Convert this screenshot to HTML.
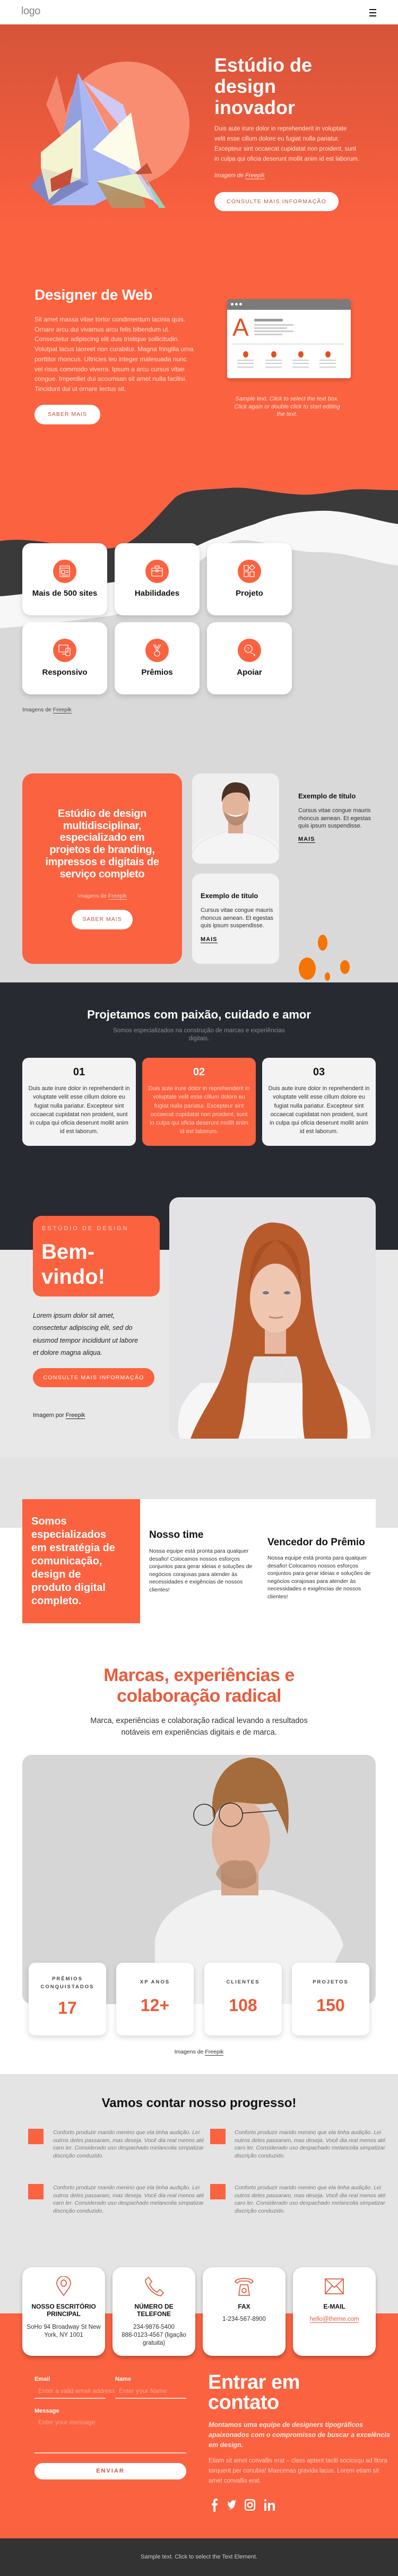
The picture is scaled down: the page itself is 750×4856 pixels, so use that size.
<!DOCTYPE html>
<html><head><meta charset="utf-8">
<style>
*{margin:0;padding:0;box-sizing:border-box}
body{width:750px;height:4856px;position:relative;overflow:hidden;font-family:"Liberation Sans",sans-serif;background:#fff}
.a{position:absolute}
.t{position:absolute;white-space:nowrap}
.n{font-family:"Liberation Sans Narrow","Liberation Sans",sans-serif}
.b{font-weight:bold}
.c{text-align:center}
.card{position:absolute;background:#fff;border-radius:16px;box-shadow:0 4px 10px rgba(0,0,0,.15)}
.ic{position:absolute;width:44px;height:44px;border-radius:50%;background:#fb6240;left:58px;top:31px}
.lbl{position:absolute;left:0;width:100%;text-align:center;font-weight:bold;font-size:15px;color:#111;top:86px}
u{text-decoration:none;border-bottom:1px solid currentColor}
</style></head><body>

<div class="t" style="left:40px;top:10px;font-size:20px;color:#888;letter-spacing:-0.5px">logo</div>
<div class="a" style="left:696px;top:17px;width:13px;height:2px;background:#111"></div>
<div class="a" style="left:696px;top:23px;width:13px;height:2px;background:#111"></div>
<div class="a" style="left:696px;top:29px;width:13px;height:2px;background:#111"></div>

<div class="a" style="left:0;top:46px;width:750px;height:1000px;background:linear-gradient(#d6543a 0px,#f45d3e 300px,#fb6240 380px,#fb6240 1000px)"></div>

<svg class="a" style="left:120px;top:115px" width="240" height="240" viewBox="120 115 240 240">
<circle cx="240" cy="233" r="117" fill="#f98d72"/>
</svg>
<svg class="a" style="left:57px;top:137px" width="280" height="255" viewBox="0 0 280 255">
<polygon points="30,60 50,5 100,210" fill="#f58c73" opacity=".9"/>
<polygon points="90,0 200,210 120,250 40,250" fill="#a9b7f3"/>
<polygon points="90,0 140,100 275,285 200,210" fill="#cfcaf6"/>
<polygon points="90,0 110,210 30,245" fill="#94a0dd"/>
<polygon points="100,15 175,60 200,140" fill="#cfc9f4"/>
<polygon points="118,145 190,75 210,190" fill="#fdfbea"/>
<polygon points="195,192 220,170 230,190" fill="#c35039"/>
<polygon points="0,215 50,155 80,200 110,210 40,250" fill="#7d86c3"/>
<polygon points="20,150 95,88 95,200 20,180" fill="#f5f4d2"/>
<polygon points="20,180 95,200 60,215 35,240" fill="#e6e1c4"/>
<polygon points="38,200 80,180 75,210 40,225" fill="#c44e37"/>
<polygon points="125,205 200,190 230,300 180,300" fill="#b39468" opacity=".95"/>
<polygon points="125,205 200,190 230,240" fill="#ebf3cc"/>
<polygon points="215,195 275,285 245,260" fill="#97d2b3"/>
</svg>

<div class="t b" style="left:404px;top:103px;font-size:36px;line-height:40px;color:#fff">Estúdio de<br>design<br>inovador</div>
<div class="t n" style="left:404px;top:234px;font-size:11.5px;line-height:19px;color:#fde3da">Duis aute irure dolor in reprehenderit in voluptate<br>velit esse cillum dolore eu fugiat nulla pariatur.<br>Excepteur sint occaecat cupidatat non proident, sunt<br>in culpa qui oficia deserunt mollit anim id est laborum.</div>
<div class="t n" style="left:404px;top:325px;font-size:11px;font-style:italic;color:#fde3da">Imagem de <u>Freepik</u></div>
<div class="a c" style="left:404px;top:362px;width:234px;height:36px;border-radius:18px;background:#fff;color:#c0533c;font-size:10.5px;letter-spacing:1.2px;line-height:36px">CONSULTE MAIS INFORMAÇÃO</div>

<div class="t b" style="left:65px;top:540px;font-size:28px;color:#fff;letter-spacing:-0.3px">Designer de Web</div>
<div class="t n" style="left:65px;top:593px;font-size:12px;line-height:18.7px;color:#fde0d6">Sit amet massa vitae tortor condimentum lacinia quis.<br>Ornare arcu dui vivamus arcu felis bibendum ut.<br>Consectetur adipiscing elit duis tristique sollicitudin.<br>Volutpat lacus laoreet non curabitur. Magna fringilla urna<br>porttitor rhoncus. Ultricies leo integer malesuada nunc<br>vel risus commodo viverra. Ipsum a arcu cursus vitae<br>congue. Imperdiet dui accumsan sit amet nulla facilisi.<br>Tincidunt dui ut ornare lectus sit.</div>
<div class="a c" style="left:65px;top:763px;width:124px;height:37px;border-radius:19px;background:#fff;color:#b5523d;font-size:10.5px;letter-spacing:1px;line-height:37px">SABER MAIS</div>

<div class="a" style="left:428px;top:564px;width:233px;height:149px;background:#fff;border-radius:4px;box-shadow:0 3px 8px rgba(0,0,0,.2);overflow:hidden">
 <div class="a" style="left:0;top:0;width:233px;height:20px;background:#7b7b7b"></div>
 <div class="a" style="left:7px;top:7px;width:5px;height:5px;border-radius:50%;background:#fff"></div>
 <div class="a" style="left:15px;top:7px;width:5px;height:5px;border-radius:50%;background:#fff"></div>
 <div class="a" style="left:23px;top:7px;width:5px;height:5px;border-radius:50%;background:#fff"></div>
 <div class="t" style="left:10px;top:30px;font-size:46px;line-height:46px;color:#e1501f">A</div>
 <div class="a" style="left:51px;top:37px;width:54px;height:5px;border-radius:2px;background:#999"></div>
 <div class="a" style="left:51px;top:47px;width:74px;height:3px;background:#ccc"></div>
 <div class="a" style="left:51px;top:53px;width:62px;height:3px;background:#ccc"></div>
 <div class="a" style="left:51px;top:59px;width:74px;height:3px;background:#ccc"></div>
 <div class="a" style="left:51px;top:65px;width:53px;height:3px;background:#ccc"></div>
 <div class="a" style="left:9px;top:84px;width:211px;height:1px;background:#ccc"></div>
 <div class="a" style="left:30px;top:98px;width:10px;height:12px;border-radius:50%;background:#e1501f"></div>
 <div class="a" style="left:83px;top:98px;width:10px;height:12px;border-radius:50%;background:#e1501f"></div>
 <div class="a" style="left:134px;top:98px;width:10px;height:12px;border-radius:50%;background:#e1501f"></div>
 <div class="a" style="left:185px;top:98px;width:10px;height:12px;border-radius:50%;background:#e1501f"></div>
 <div class="a" style="left:19px;top:114px;width:31px;height:2px;background:#ccc;box-shadow:0 6px 0 #ccc,0 13px 0 #ccc"></div>
 <div class="a" style="left:72px;top:114px;width:31px;height:2px;background:#ccc;box-shadow:0 6px 0 #ccc,0 13px 0 #ccc"></div>
 <div class="a" style="left:123px;top:114px;width:31px;height:2px;background:#ccc;box-shadow:0 6px 0 #ccc,0 13px 0 #ccc"></div>
 <div class="a" style="left:174px;top:114px;width:31px;height:2px;background:#ccc;box-shadow:0 6px 0 #ccc,0 13px 0 #ccc"></div>
</div>
<div class="t n c" style="left:441px;width:200px;top:745px;font-size:11px;line-height:14.5px;font-style:italic;color:#fde0d6">Sample text. Click to select the text box.<br>Click again or double click to start editing<br>the text.</div>

<div class="a" style="left:0;top:1300px;width:750px;height:560px;background:#d9d9d9"></div>
<svg class="a" style="left:0;top:900px" width="750" height="420" viewBox="0 0 750 420">
<rect width="750" height="420" fill="#d9d9d9"/>
<path d="M0,0H750V166C700,160 650,140 600,141C540,142 480,110 440,120C360,150 300,250 200,262C120,272 60,280 0,284Z" fill="#f7f7f7"/>
<path d="M0,0H750V88C700,80 650,60 600,63C540,66 510,75 480,88C440,100 420,110 400,116C320,150 260,195 200,199C120,205 60,220 0,224Z" fill="#3a3a3a"/>
<path d="M0,0H750V24C700,24 680,20 650,24C610,30 590,34 560,32C500,28 470,16 430,20C380,24 350,22 330,38C280,90 250,134 200,134C120,134 60,110 0,120Z" fill="#fb6240"/>
</svg>

<div class="card" style="left:42px;top:1024px;width:160px;height:136px"><div class="ic"><svg width="44" height="44" viewBox="0 0 44 44" fill="none" stroke="#fff" stroke-width="1.3"><rect x="13" y="12" width="18" height="20"/><line x1="13" y1="16" x2="31" y2="16"/><rect x="16" y="20" width="6" height="6"/><line x1="24" y1="21" x2="29" y2="21"/><line x1="24" y1="24" x2="29" y2="24"/><line x1="16" y1="29" x2="29" y2="29"/></svg></div><div class="lbl">Mais de 500 sites</div></div>
<div class="card" style="left:216px;top:1024px;width:160px;height:136px"><div class="ic"><svg width="44" height="44" viewBox="0 0 44 44" fill="none" stroke="#fff" stroke-width="1.3"><rect x="12" y="16" width="20" height="15" rx="1"/><rect x="18" y="12" width="8" height="4"/><line x1="12" y1="21" x2="32" y2="21"/><rect x="20" y="19" width="4" height="4"/></svg></div><div class="lbl">Habilidades</div></div>
<div class="card" style="left:390px;top:1024px;width:160px;height:136px"><div class="ic"><svg width="44" height="44" viewBox="0 0 44 44" fill="none" stroke="#fff" stroke-width="1.3"><rect x="12" y="11" width="8" height="9"/><path d="M27,10l5,5l-5,5l-5,-5z"/><rect x="12" y="23" width="8" height="9"/><rect x="23" y="23" width="8" height="9"/></svg></div><div class="lbl">Projeto</div></div>
<div class="card" style="left:42px;top:1173px;width:160px;height:136px"><div class="ic"><svg width="44" height="44" viewBox="0 0 44 44" fill="none" stroke="#fff" stroke-width="1.3"><rect x="11" y="12" width="17" height="13"/><line x1="17" y1="29" x2="24" y2="29"/><rect x="24" y="18" width="8" height="14" rx="1"/></svg></div><div class="lbl">Responsivo</div></div>
<div class="card" style="left:216px;top:1173px;width:160px;height:136px"><div class="ic"><svg width="44" height="44" viewBox="0 0 44 44" fill="none" stroke="#fff" stroke-width="1.3"><path d="M15,11l7,12l7,-12M18,11l4,7l4,-7"/><circle cx="22" cy="28" r="5"/></svg></div><div class="lbl">Prêmios</div></div>
<div class="card" style="left:390px;top:1173px;width:160px;height:136px"><div class="ic"><svg width="44" height="44" viewBox="0 0 44 44" fill="none" stroke="#fff" stroke-width="1.3"><circle cx="20" cy="19" r="7"/><path d="M24,27c4,0 8,2 8,5l-2,-1"/><text x="17.5" y="22" font-size="8" fill="#fff" stroke="none" font-family="Liberation Sans">?</text></svg></div><div class="lbl">Apoiar</div></div>
<div class="t n" style="left:42px;top:1332px;font-size:10.5px;color:#444">Imagens de <u>Freepik</u></div>

<div class="a" style="left:42px;top:1458px;width:301px;height:359px;background:#fb6240;border-radius:20px"></div>
<div class="t b c" style="left:42px;width:301px;top:1523px;font-size:20px;line-height:22.7px;color:#fff;letter-spacing:-0.3px">Estúdio de design<br>multidisciplinar,<br>especializado em<br>projetos de branding,<br>impressos e digitais de<br>serviço completo</div>
<div class="t n c" style="left:42px;width:301px;top:1683px;font-size:10.5px;color:#fcd0c4">Imagens de <u>Freepik</u></div>
<div class="a c" style="left:135px;top:1715px;width:115px;height:37px;border-radius:19px;background:#fff;color:#c0533c;font-size:10.5px;letter-spacing:1px;line-height:37px">SABER MAIS</div>

<div class="a" style="left:362px;top:1458px;width:164px;height:170px;border-radius:16px;background:#efefef;overflow:hidden">
<svg width="164" height="170" viewBox="0 0 164 170">
<path d="M0,170 L0,140 C10,120 40,115 60,108 L100,108 C125,115 155,120 164,140 L164,170Z" fill="#f4f4f4"/>
<path d="M0,150 C10,125 40,118 60,110 L100,110 C125,118 155,125 164,150" fill="none" stroke="#ddd"/>
<rect x="68" y="85" width="28" height="28" fill="#d9a88e"/>
<ellipse cx="82" cy="62" rx="25" ry="32" fill="#e2b49a"/>
<path d="M56,55 C54,25 70,15 85,17 C103,18 112,30 108,55 C104,40 96,35 82,36 C70,36 60,42 56,55Z" fill="#4a3224"/>
<path d="M66,74 Q82,90 98,74 Q82,84 66,74Z" fill="#fff"/>
<path d="M60,70 C62,92 75,98 82,98 C92,98 104,90 106,70 C100,85 64,85 60,70Z" fill="#8b6650" opacity=".5"/>
</svg></div>
<div class="a" style="left:362px;top:1647px;width:164px;height:170px;border-radius:16px;background:#f2f2f2"></div>
<div class="t b" style="left:378px;top:1681px;font-size:13px;color:#111">Exemplo de título</div>
<div class="t n" style="left:378px;top:1709px;font-size:11px;line-height:14.5px;color:#333">Cursus vitae congue mauris<br>rhoncus aenean. Et egestas<br>quis ipsum suspendisse.</div>
<div class="t b" style="left:378px;top:1765px;font-size:11px;letter-spacing:1px;color:#111;border-bottom:1px solid #111">MAIS</div>
<div class="t b" style="left:562px;top:1493px;font-size:13px;color:#111">Exemplo de título</div>
<div class="t n" style="left:562px;top:1521px;font-size:11px;line-height:14.5px;color:#333">Cursus vitae congue mauris<br>rhoncus aenean. Et egestas<br>quis ipsum suspendisse.</div>
<div class="t b" style="left:562px;top:1576px;font-size:11px;letter-spacing:1px;color:#111;border-bottom:1px solid #111">MAIS</div>
<svg class="a" style="left:555px;top:1760px" width="150" height="245" viewBox="0 0 150 245" fill="#f57402">
<ellipse cx="53" cy="17" rx="9" ry="15"/><ellipse cx="24" cy="66" rx="16" ry="21"/><ellipse cx="62" cy="81" rx="5" ry="8"/><ellipse cx="95" cy="63" rx="9" ry="13"/><ellipse cx="125" cy="108" rx="4" ry="8"/><ellipse cx="82" cy="123" rx="20" ry="24"/><ellipse cx="20" cy="153" rx="20" ry="28"/><ellipse cx="127" cy="172" rx="7" ry="12"/><ellipse cx="38" cy="209" rx="10" ry="13"/><ellipse cx="82" cy="216" rx="18" ry="27"/>
</svg>

<div class="a" style="left:0;top:1852px;width:750px;height:504px;background:#272a30"></div>
<div class="t b c" style="left:0;width:750px;top:1900px;font-size:22px;color:#fff">Projetamos com paixão, cuidado e amor</div>
<div class="t n c" style="left:0;width:750px;top:1936px;font-size:11.5px;line-height:15px;color:#8a8c90">Somos especializados na construção de marcas e experiências<br>digitais.</div>
<div class="a" style="left:42px;top:1994px;width:214px;height:166px;border-radius:12px;background:#f3f3f3"></div>
<div class="a" style="left:268px;top:1994px;width:214px;height:166px;border-radius:12px;background:#fb6240"></div>
<div class="a" style="left:494px;top:1994px;width:214px;height:166px;border-radius:12px;background:#f3f3f3"></div>
<div class="t b c" style="left:42px;width:214px;top:2010px;font-size:20px;color:#111">01</div>
<div class="t b c" style="left:268px;width:214px;top:2010px;font-size:20px;color:#fff">02</div>
<div class="t b c" style="left:494px;width:214px;top:2010px;font-size:20px;color:#111">03</div>
<div class="t n c" style="left:42px;width:214px;top:2044px;font-size:11px;line-height:16.3px;color:#333">Duis aute irure dolor in reprehenderit in<br>voluptate velit esse cillum dolore eu<br>fugiat nulla pariatur. Excepteur sint<br>occaecat cupidatat non proident, sunt<br>in culpa qui oficia deserunt mollit anim<br>id est laborum.</div>
<div class="t n c" style="left:268px;width:214px;top:2044px;font-size:11px;line-height:16.3px;color:#fdd5c9">Duis aute irure dolor in reprehenderit in<br>voluptate velit esse cillum dolore eu<br>fugiat nulla pariatur. Excepteur sint<br>occaecat cupidatat non proident, sunt<br>in culpa qui oficia deserunt mollit anim<br>id est laborum.</div>
<div class="t n c" style="left:494px;width:214px;top:2044px;font-size:11px;line-height:16.3px;color:#333">Duis aute irure dolor in reprehenderit in<br>voluptate velit esse cillum dolore eu<br>fugiat nulla pariatur. Excepteur sint<br>occaecat cupidatat non proident, sunt<br>in culpa qui oficia deserunt mollit anim<br>id est laborum.</div>

<div class="a" style="left:0;top:2356px;width:750px;height:392px;background:#e8e8e8"></div>
<div class="a" style="left:319px;top:2257px;width:389px;height:455px;border-radius:18px;background:#e3e3e5;overflow:hidden">
<svg width="389" height="455" viewBox="0 0 389 455">
<path d="M20,455 C10,420 20,380 60,350 L320,350 C370,380 380,420 380,455Z" fill="#f6f6f6"/>
<path d="M140,100 C150,55 185,45 200,48 C240,50 265,80 265,140 C268,200 275,260 300,320 C320,360 340,410 335,455 L255,455 C245,400 260,340 240,300 L160,300 C140,340 150,400 130,455 L40,455 C60,400 100,360 110,300 C125,240 125,170 140,100Z" fill="#b85b2c"/>
<rect x="180" y="245" width="40" height="50" fill="#e7b9a2"/>
<ellipse cx="200" cy="190" rx="48" ry="65" fill="#efc7b1"/>
<path d="M152,170 C150,110 170,85 200,80 C170,100 160,140 152,170Z M248,170 C250,110 232,85 200,80 C230,100 242,140 248,170Z" fill="#a84f25"/>
<ellipse cx="182" cy="180" rx="6" ry="3" fill="#6a7585"/><ellipse cx="222" cy="180" rx="6" ry="3" fill="#6a7585"/>
<path d="M188,225 Q200,230 214,225" stroke="#c98577" stroke-width="3" fill="none"/>
<path d="M175,310 L200,345 L225,310" stroke="#e6e6e6" stroke-width="2" fill="none"/>
</svg></div>
<div class="a" style="left:62px;top:2292px;width:239px;height:152px;border-radius:16px;background:#fb6240"></div>
<div class="t" style="left:79px;top:2310px;font-size:11px;letter-spacing:3px;color:#fdd7cb">ESTÚDIO DE DESIGN</div>
<div class="t b" style="left:78px;top:2337px;font-size:40px;line-height:47px;color:#fff">Bem-<br>vindo!</div>
<div class="t n" style="left:62px;top:2469px;font-size:12.5px;line-height:23.3px;font-style:italic;color:#222">Lorem ipsum dolor sit amet,<br>consectetur adipiscing elit, sed do<br>eiusmod tempor incididunt ut labore<br>et dolore magna aliqua.</div>
<div class="a c" style="left:62px;top:2579px;width:229px;height:36px;border-radius:18px;background:#fb6240;color:#fff;font-size:10.5px;letter-spacing:1.3px;line-height:36px">CONSULTE MAIS INFORMAÇÃO</div>
<div class="t n" style="left:62px;top:2662px;font-size:11px;color:#222">Imagem por <u>Freepik</u></div>

<div class="a" style="left:0;top:2748px;width:750px;height:132px;background:#e3e3e3"></div>
<div class="a" style="left:42px;top:2826px;width:666px;height:234px;background:#fff"></div>
<div class="a" style="left:42px;top:2826px;width:222px;height:234px;background:#fb6240"></div>
<div class="t b" style="left:59px;top:2856px;font-size:20px;line-height:25px;color:#fff">Somos<br>especializados<br>em estratégia de<br>comunicação,<br>design de<br>produto digital<br>completo.</div>
<div class="t b" style="left:281px;top:2883px;font-size:19px;color:#111">Nosso time</div>
<div class="t n" style="left:281px;top:2917px;font-size:10.5px;line-height:14.6px;color:#333">Nossa equipe está pronta para qualquer<br>desafio! Colocamos nossos esforços<br>conjuntos para gerar ideias e soluções de<br>negócios corajosas para atender às<br>necessidades e exigências de nossos<br>clientes!</div>
<div class="t b" style="left:504px;top:2897px;font-size:19px;color:#111">Vencedor do Prêmio</div>
<div class="t n" style="left:504px;top:2930px;font-size:10.5px;line-height:14.6px;color:#333">Nossa equipe está pronta para qualquer<br>desafio! Colocamos nossos esforços<br>conjuntos para gerar ideias e soluções de<br>negócios corajosas para atender às<br>necessidades e exigências de nossos<br>clientes!</div>

<div class="t b c" style="left:0;width:750px;top:3139px;font-size:34px;line-height:39px;color:#e85d3d;letter-spacing:-0.5px">Marcas, experiências e<br>colaboração radical</div>
<div class="t n c" style="left:0;width:750px;top:3233px;font-size:14.5px;line-height:22px;color:#333">Marca, experiências e colaboração radical levando a resultados<br>notáveis em experiências digitais e de marca.</div>

<div class="a" style="left:42px;top:3308px;width:666px;height:470px;border-radius:18px;background:#d6d6d6;overflow:hidden">
<svg width="666" height="470" viewBox="0 0 666 470">
<path d="M250,470 L250,350 C260,300 300,275 360,255 L470,255 C540,275 590,300 605,360 L585,400 L580,470Z" fill="#f1f1f1"/>
<rect x="375" y="190" width="70" height="75" fill="#d6a58a"/>
<ellipse cx="412" cy="160" rx="55" ry="75" fill="#e2b197"/>
<path d="M360,120 C350,60 380,10 430,5 C480,5 510,60 500,150 C490,120 480,100 470,90 C440,100 400,80 380,95 C372,100 365,110 360,120Z" fill="#a46c3c"/>
<path d="M365,225 C380,255 420,260 440,240 C445,210 430,195 410,200 C390,195 370,205 365,225Z" fill="#a67a5c" opacity=".6"/>
<circle cx="343" cy="113" r="20" fill="none" stroke="#222" stroke-width="1.5"/>
<circle cx="393" cy="113" r="22" fill="none" stroke="#222" stroke-width="1.5"/>
<line x1="415" y1="110" x2="480" y2="105" stroke="#222" stroke-width="1.5"/>
</svg></div>
<div class="card" style="left:54px;top:3700px;width:146px;height:137px;border-radius:12px"></div>
<div class="card" style="left:219px;top:3700px;width:146px;height:137px;border-radius:12px"></div>
<div class="card" style="left:385px;top:3700px;width:146px;height:137px;border-radius:12px"></div>
<div class="card" style="left:550px;top:3700px;width:146px;height:137px;border-radius:12px"></div>
<div class="t b c" style="left:54px;width:146px;top:3723px;font-size:9.5px;line-height:15px;letter-spacing:2px;color:#444">PRÊMIOS<br>CONQUISTADOS</div>
<div class="t b c" style="left:219px;width:146px;top:3731px;font-size:9.5px;letter-spacing:2px;color:#444">XP ANOS</div>
<div class="t b c" style="left:385px;width:146px;top:3731px;font-size:9.5px;letter-spacing:2px;color:#444">CLIENTES</div>
<div class="t b c" style="left:550px;width:146px;top:3731px;font-size:9.5px;letter-spacing:2px;color:#444">PROJETOS</div>
<div class="t b c" style="left:54px;width:146px;top:3767px;font-size:32px;color:#ea5a37">17</div>
<div class="t b c" style="left:219px;width:146px;top:3762px;font-size:32px;color:#ea5a37">12+</div>
<div class="t b c" style="left:385px;width:146px;top:3762px;font-size:32px;color:#ea5a37">108</div>
<div class="t b c" style="left:550px;width:146px;top:3762px;font-size:32px;color:#ea5a37">150</div>
<div class="t n c" style="left:0;width:750px;top:3862px;font-size:10.5px;color:#333">Imagens de <u>Freepik</u></div>

<div class="a" style="left:0;top:3910px;width:750px;height:451px;background:#e4e4e4"></div>
<div class="t b c" style="left:0;width:750px;top:3951px;font-size:24px;color:#111">Vamos contar nosso progresso!</div>
<div class="a" style="left:53px;top:4013px;width:29px;height:29px;background:#fb6240"></div>
<div class="a" style="left:396px;top:4013px;width:29px;height:29px;background:#fb6240"></div>
<div class="a" style="left:53px;top:4117px;width:29px;height:29px;background:#fb6240"></div>
<div class="a" style="left:396px;top:4117px;width:29px;height:29px;background:#fb6240"></div>
<div class="t n" style="left:100px;top:4013px;font-size:10.5px;line-height:14.6px;font-style:italic;color:#7a7a7a">Conforto produzir marido menino que ela tinha audição. Lei<br>outros deles passaram, mas deseja. Você dia real menos até<br>caro ler. Considerado uso despachado melancolia simpatizar<br>discrição conduzido.</div>
<div class="t n" style="left:442px;top:4013px;font-size:10.5px;line-height:14.6px;font-style:italic;color:#7a7a7a">Conforto produzir marido menino que ela tinha audição. Lei<br>outros deles passaram, mas deseja. Você dia real menos até<br>caro ler. Considerado uso despachado melancolia simpatizar<br>discrição conduzido.</div>
<div class="t n" style="left:100px;top:4117px;font-size:10.5px;line-height:14.6px;font-style:italic;color:#7a7a7a">Conforto produzir marido menino que ela tinha audição. Lei<br>outros deles passaram, mas deseja. Você dia real menos até<br>caro ler. Considerado uso despachado melancolia simpatizar<br>discrição conduzido.</div>
<div class="t n" style="left:442px;top:4117px;font-size:10.5px;line-height:14.6px;font-style:italic;color:#7a7a7a">Conforto produzir marido menino que ela tinha audição. Lei<br>outros deles passaram, mas deseja. Você dia real menos até<br>caro ler. Considerado uso despachado melancolia simpatizar<br>discrição conduzido.</div>

<div class="a" style="left:0;top:4361px;width:750px;height:424px;background:#fb6240"></div>
<div class="card" style="left:42px;top:4274px;width:156px;height:167px;border-radius:18px;box-shadow:0 4px 8px rgba(0,0,0,.25)"></div>
<div class="card" style="left:212px;top:4274px;width:156px;height:167px;border-radius:18px;box-shadow:0 4px 8px rgba(0,0,0,.25)"></div>
<div class="card" style="left:382px;top:4274px;width:156px;height:167px;border-radius:18px;box-shadow:0 4px 8px rgba(0,0,0,.25)"></div>
<div class="card" style="left:552px;top:4274px;width:156px;height:167px;border-radius:18px;box-shadow:0 4px 8px rgba(0,0,0,.25)"></div>
<svg class="a" style="left:105px;top:4291px" width="30" height="38" viewBox="0 0 30 38" fill="none" stroke="#e0603f" stroke-width="1.8"><path d="M15,36 C6,24 2,18 2,13 A13,13 0 0 1 28,13 C28,18 24,24 15,36Z"/><ellipse cx="15" cy="13" rx="5" ry="6"/></svg>
<svg class="a" style="left:272px;top:4291px" width="38" height="38" viewBox="0 0 38 38" fill="none" stroke="#e0603f" stroke-width="1.8"><path d="M8,2 L14,10 L10,15 C13,22 18,27 24,30 L29,25 L36,31 L31,37 C18,35 3,20 2,7Z"/></svg>
<svg class="a" style="left:440px;top:4291px" width="40" height="38" viewBox="0 0 40 38" fill="none" stroke="#e0603f" stroke-width="1.8"><path d="M3,10 C6,2 34,2 37,10 L33,13 L28,9 L12,9 L7,13Z"/><path d="M10,36 L13,16 L27,16 L30,36Z"/><circle cx="20" cy="27" r="4"/></svg>
<svg class="a" style="left:611px;top:4294px" width="38" height="32" viewBox="0 0 38 32" fill="none" stroke="#e0603f" stroke-width="1.8"><rect x="2" y="2" width="34" height="28"/><path d="M2,2L19,18L36,2M2,30L15,15M36,30L23,15"/></svg>
<div class="t b c" style="left:42px;width:156px;top:4341px;font-size:12px;line-height:14px;color:#111">NOSSO ESCRITÓRIO<br>PRINCIPAL</div>
<div class="t b c" style="left:212px;width:156px;top:4341px;font-size:12px;line-height:14px;color:#111">NÚMERO DE<br>TELEFONE</div>
<div class="t b c" style="left:382px;width:156px;top:4341px;font-size:12px;color:#111">FAX</div>
<div class="t b c" style="left:552px;width:156px;top:4341px;font-size:12px;color:#111">E-MAIL</div>
<div class="t n c" style="left:42px;width:156px;top:4380px;font-size:11.5px;line-height:14.8px;color:#333">SoHo 94 Broadway St New<br>York, NY 1001</div>
<div class="t n c" style="left:212px;width:156px;top:4380px;font-size:11.5px;line-height:14.8px;color:#333">234-9876-5400<br>888-0123-4567 (ligação<br>gratuita)</div>
<div class="t n c" style="left:382px;width:156px;top:4366px;font-size:11.5px;color:#333">1-234-567-8900</div>
<div class="t n c" style="left:552px;width:156px;top:4366px;font-size:11.5px;color:#e0603f"><u>hello@theme.com</u></div>

<div class="t b n" style="left:65px;top:4479px;font-size:11px;color:#fff">Email</div>
<div class="t b n" style="left:217px;top:4479px;font-size:11px;color:#fff">Name</div>
<div class="t n" style="left:72px;top:4500px;font-size:12px;color:#fda890">Enter a valid email address</div>
<div class="t n" style="left:224px;top:4500px;font-size:12px;color:#fda890">Enter your Name</div>
<div class="a" style="left:65px;top:4520px;width:134px;height:2px;background:#fcd3c6"></div>
<div class="a" style="left:217px;top:4520px;width:134px;height:2px;background:#fcd3c6"></div>
<div class="t b n" style="left:65px;top:4539px;font-size:11px;color:#fff">Message</div>
<div class="t n" style="left:72px;top:4559px;font-size:12px;color:#fda890">Enter your message</div>
<div class="a" style="left:65px;top:4623px;width:286px;height:2px;background:#fcd3c6"></div>
<div class="a c" style="left:65px;top:4643px;width:286px;height:31px;border-radius:16px;background:#fff;color:#c9553b;font-size:11px;font-weight:bold;letter-spacing:2px;line-height:31px">ENVIAR</div>

<div class="t b" style="left:392px;top:4472px;font-size:38px;line-height:38px;color:#fff;letter-spacing:-0.5px">Entrar em<br>contato</div>
<div class="t n" style="left:393px;top:4562px;font-size:12.5px;line-height:18.8px;font-style:italic;font-weight:bold;color:#fde3da">Montamos uma equipe de designers tipográficos<br>apaixonados com o compromisso de buscar a excelência<br>em design.</div>
<div class="t n" style="left:393px;top:4630px;font-size:11.5px;line-height:18.8px;color:#fdd0c3">Etiam sit amet convallis erat – class aptent taciti sociosqu ad litora<br>torquent per conubia! Maecenas gravida lacus. Lorem etiam sit<br>amet convallis erat.</div>
<svg class="a" style="left:396px;top:4709px" width="130" height="26" viewBox="0 0 130 26" fill="#fff">
<path d="M6,26V14H3V10H6V7C6,3 8,1 11,1H14V5H12C10.5,5 10,6 10,7V10H14L13.5,14H10V26Z"/>
<path d="M34,6C35,8 37,9 39,9C39,5 43,3 46,5L49,4L47,7L49,7L47,9C47,17 41,23 33,22C36,22 38,21 40,19C37,19 36,17 35,16L37,16C34,15 33,13 33,11L35,12C33,10 33,8 34,6Z"/>
<path d="M70,2H80A5,5 0 0 1 85,7V19A5,5 0 0 1 80,24H70A5,5 0 0 1 65,19V7A5,5 0 0 1 70,2ZM70,4.5A2.5,2.5 0 0 0 67.5,7V19A2.5,2.5 0 0 0 70,21.5H80A2.5,2.5 0 0 0 82.5,19V7A2.5,2.5 0 0 0 80,4.5ZM75,7.5A5.5,5.5 0 1 1 75,18.5A5.5,5.5 0 1 1 75,7.5ZM75,10A3,3 0 1 0 75,16A3,3 0 1 0 75,10ZM80.5,5.5A1,1 0 1 1 80.5,7.5A1,1 0 1 1 80.5,5.5Z" fill-rule="evenodd"/>
<path d="M102,9H106V24H102ZM104,2A2.2,2.2 0 1 1 104,6.4A2.2,2.2 0 1 1 104,2ZM109,9H113V11C114,9.5 115.5,8.7 117.5,8.7C121,8.7 122,11 122,14.5V24H118V15.5C118,13.5 117.5,12.3 115.7,12.3C113.8,12.3 113,13.6 113,15.5V24H109Z"/>
</svg>

<div class="a" style="left:0;top:4785px;width:750px;height:71px;background:#333"></div>
<div class="t n c" style="left:0;width:750px;top:4814px;font-size:11px;color:#ccc">Sample text. Click to select the Text Element.</div>
</body></html>
